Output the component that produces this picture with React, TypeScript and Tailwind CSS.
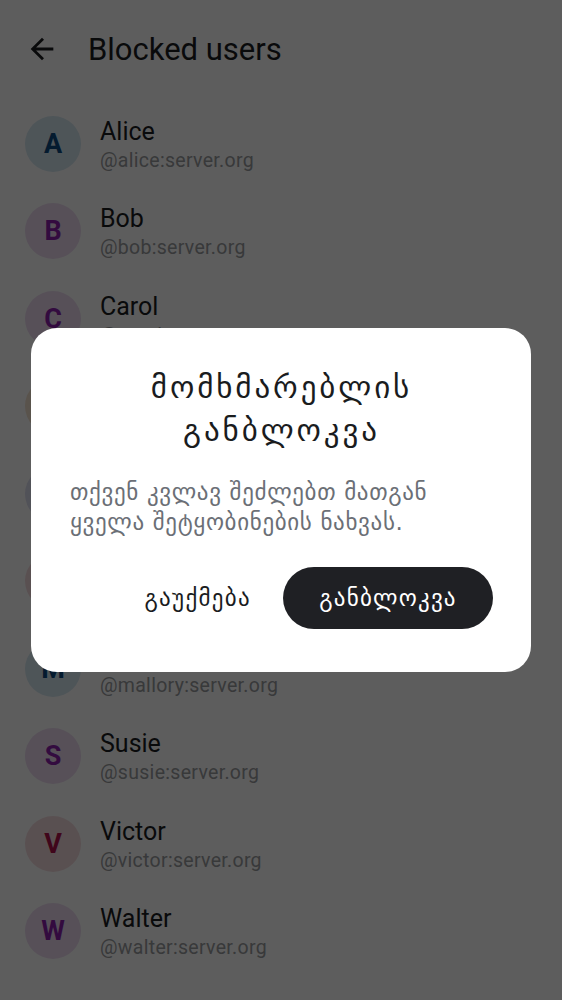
import React from 'react';

type User = {
  name: string;
  handle: string;
  bg: string;
  fg: string;
};

const users: User[] = [
  { name: 'Alice', handle: '@alice:server.org', bg: 'bg-[#d6e8f2]', fg: 'text-[#0d4a80]' },
  { name: 'Bob', handle: '@bob:server.org', bg: 'bg-[#eddcf2]', fg: 'text-[#8c1fae]' },
  { name: 'Carol', handle: '@carol:server.org', bg: 'bg-[#eddcf2]', fg: 'text-[#8c1fae]' },
  { name: 'Dave', handle: '@dave:server.org', bg: 'bg-[#f5e3d0]', fg: 'text-[#8a4614]' },
  { name: 'Eve', handle: '@eve:server.org', bg: 'bg-[#dfe0f2]', fg: 'text-[#303a96]' },
  { name: 'Frank', handle: '@frank:server.org', bg: 'bg-[#f5dcdf]', fg: 'text-[#a3143a]' },
  { name: 'Mallory', handle: '@mallory:server.org', bg: 'bg-[#d6e8f2]', fg: 'text-[#0d4a80]' },
  { name: 'Susie', handle: '@susie:server.org', bg: 'bg-[#eddcf2]', fg: 'text-[#8c1fae]' },
  { name: 'Victor', handle: '@victor:server.org', bg: 'bg-[#f5dcdf]', fg: 'text-[#b0124c]' },
  { name: 'Walter', handle: '@walter:server.org', bg: 'bg-[#eddcf2]', fg: 'text-[#8c1fae]' },
];

function BackArrow() {
  return (
    <svg width="34" height="34" viewBox="0 0 24 24" fill="currentColor">
      <path d="M20 11H7.83l5.59-5.59L12 4l-8 8 8 8 1.41-1.41L7.83 13H20v-2z" />
    </svg>
  );
}

export default function App() {
  return (
    <div className="relative h-[1000px] w-full overflow-hidden bg-white font-['Roboto','DejaVu_Sans',sans-serif]">
      {/* Header */}
      <div className="flex h-[100px] items-center pl-[25px] pb-[2px]">
        <div className="text-[#1a1c1e]">
          <BackArrow />
        </div>
        <h1 className="ml-[29px] text-[31px] leading-none text-[#1a1c1e]">Blocked users</h1>
      </div>

      {/* List */}
      <div className="flex flex-col">
        {users.map((u) => (
          <div key={u.name} className="flex h-[87.5px] items-center gap-[19px] px-[25px]">
            <div
              className={`flex h-[56px] w-[56px] shrink-0 items-center justify-center rounded-full text-[27px] font-bold ${u.bg} ${u.fg}`}
            >
              {u.name[0]}
            </div>
            <div className="flex flex-col pt-[4px]">
              <span className="text-[25px] leading-[29px] text-[#1a1c1e]">{u.name}</span>
              <span className="text-[19.5px] leading-[29px] tracking-[0.3px] text-[#9a9ca0]">{u.handle}</span>
            </div>
          </div>
        ))}
      </div>

      {/* Dialog overlay */}
      <div className="absolute inset-0 flex items-center justify-center bg-black/[0.635]">
        <div className="w-[500px] rounded-[26px] bg-white pl-[39px] pr-[38px] pt-[38px] pb-[43px] font-['DejaVu_Sans',sans-serif]">
          <h2 className="text-center text-[31px] leading-[43px] tracking-[2.9px] text-[#1a1c1e]">
            მომხმარებლის
            <br />
            განბლოკვა
          </h2>
          <p className="mt-[25px] text-[23px] leading-[30px] tracking-[0.65px] text-[#6b6f76]">
            თქვენ კვლავ შეძლებთ მათგან
            <br />
            ყველა შეტყობინების ნახვას.
          </p>
          <div className="mt-[30px] flex items-center justify-end gap-[8px]">
            <button className="h-[62px] rounded-full px-[24px] text-[23px] tracking-[1.3px] text-[#1a1c1e]">
              გაუქმება
            </button>
            <button className="h-[62px] w-[210px] rounded-full bg-[#1f2024] text-[23px] tracking-[1.2px] text-white">
              განბლოკვა
            </button>
          </div>
        </div>
      </div>
    </div>
  );
}
